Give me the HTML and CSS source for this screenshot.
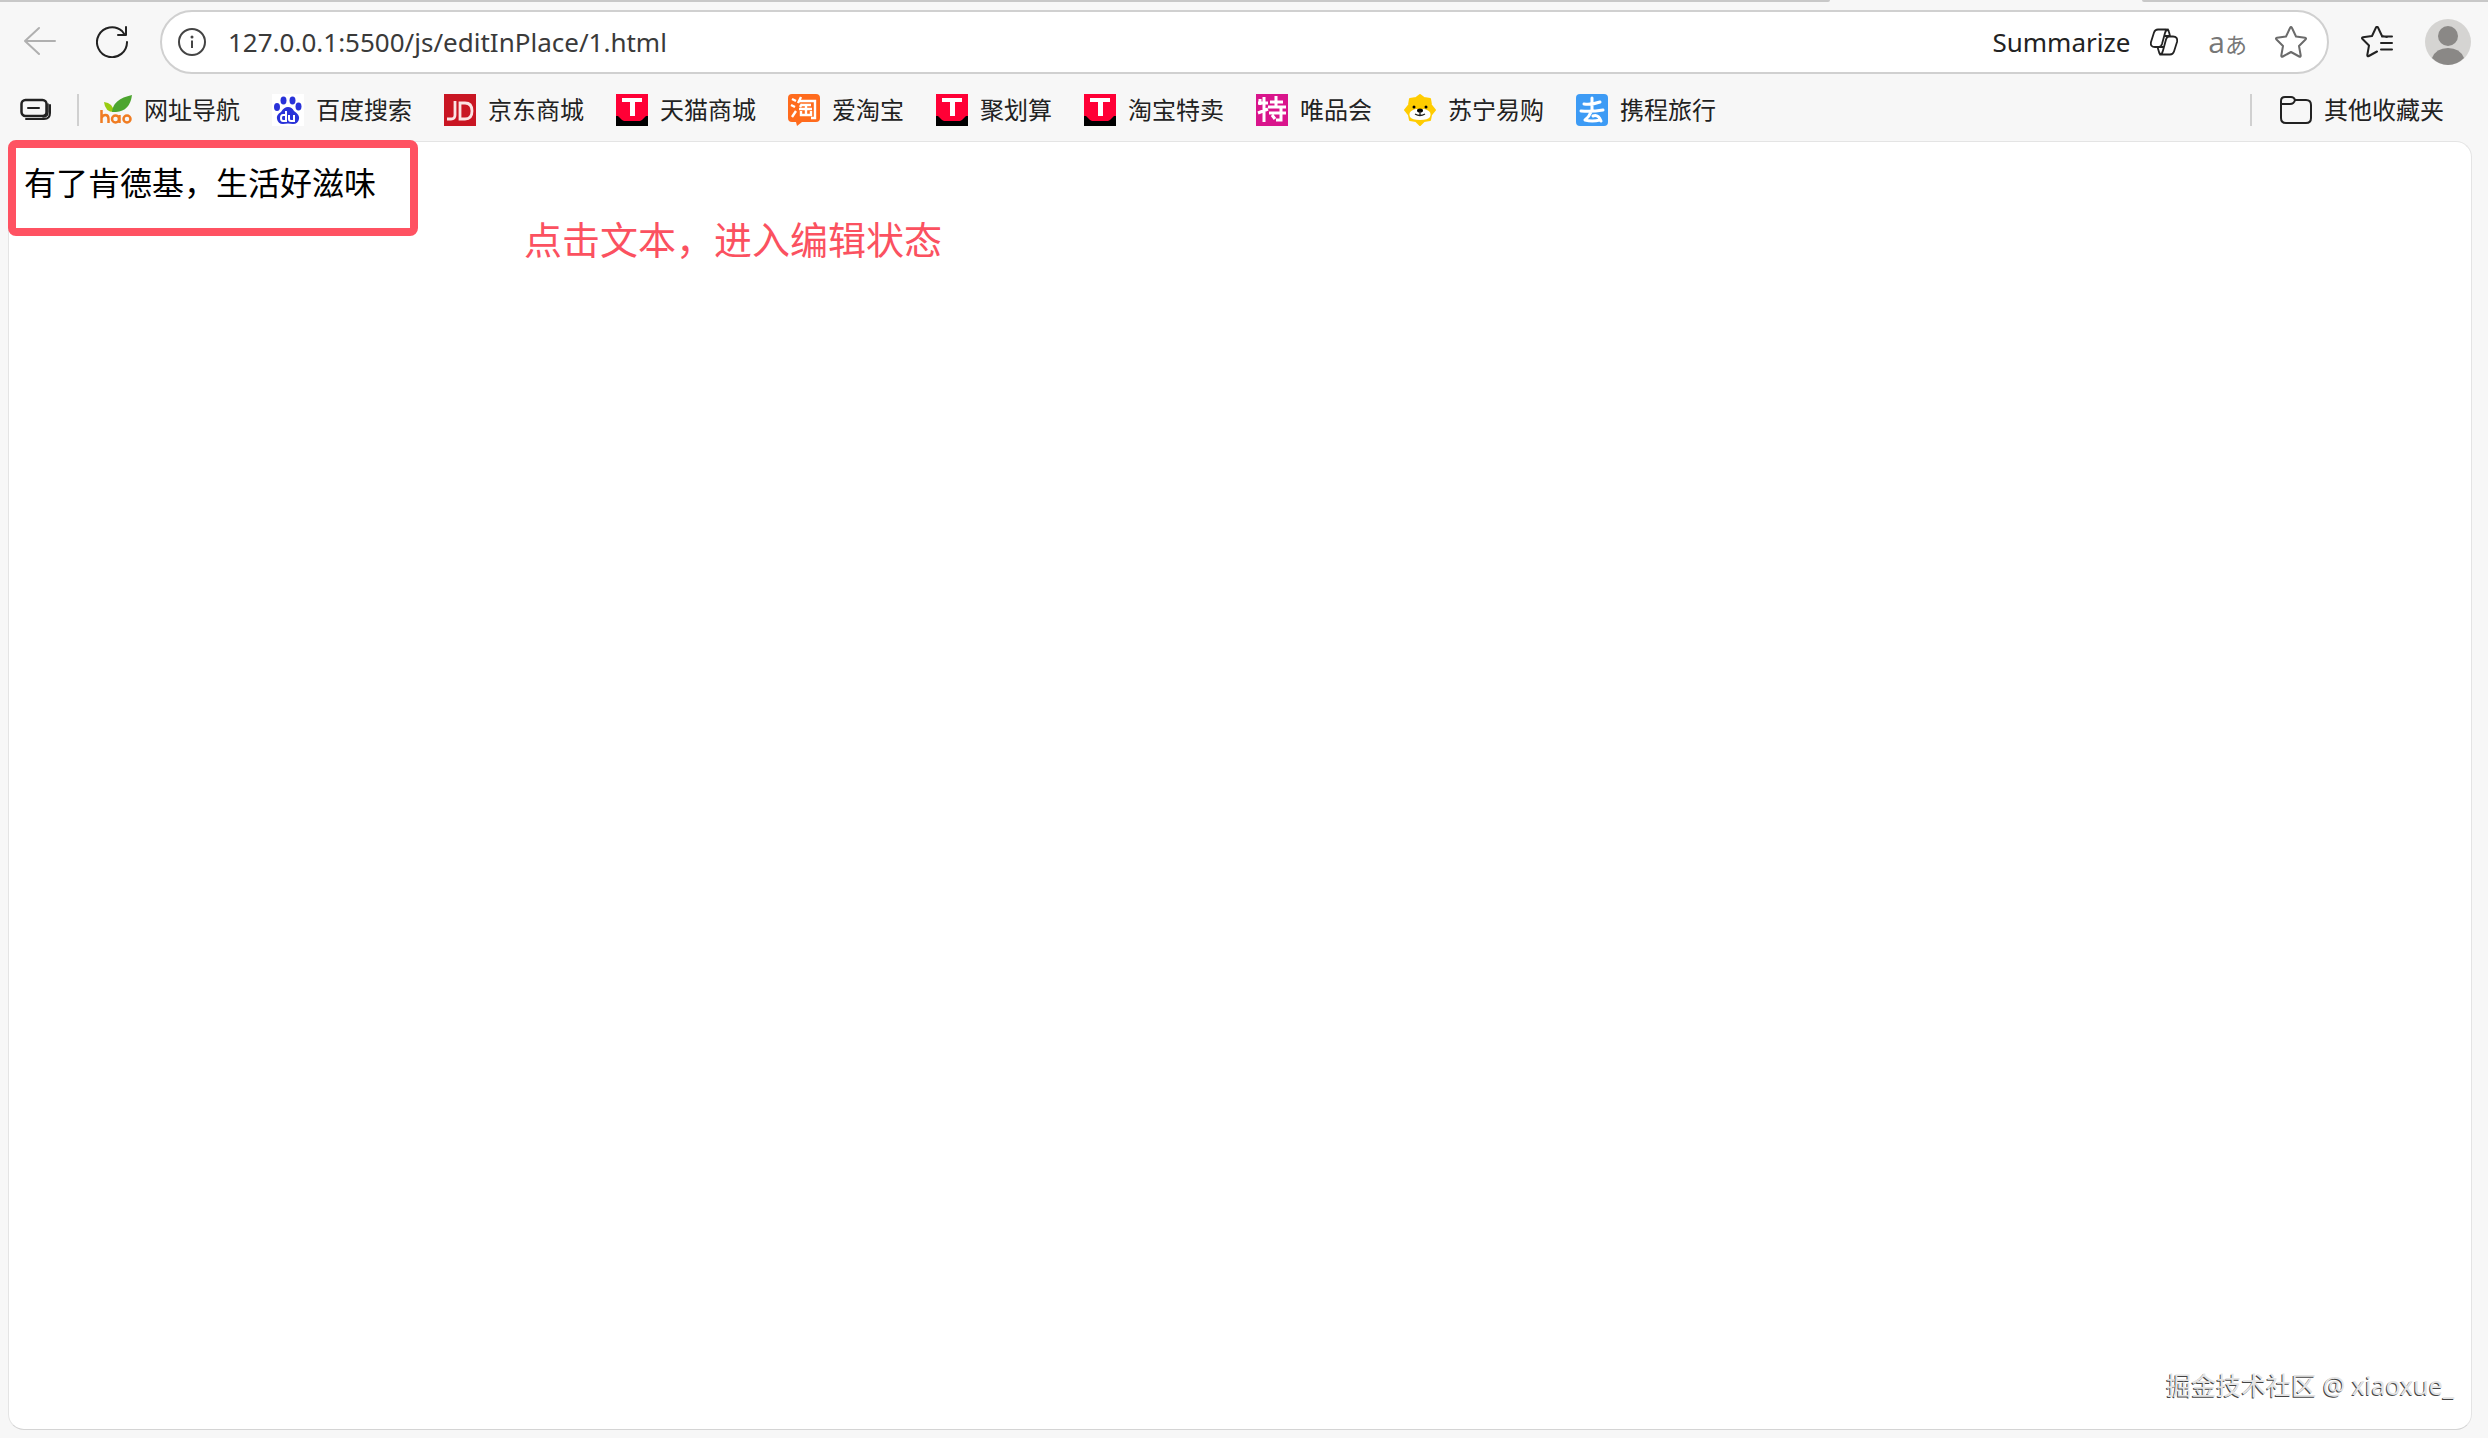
FILE: index.html
```html
<!DOCTYPE html>
<html lang="zh-CN">
<head>
<meta charset="utf-8">
<title>1.html</title>
<link rel="stylesheet" href="styles.css">
</head>
<body>
<svg class="defs" aria-hidden="true">
  <symbol id="tmall" viewBox="0 0 32 32">
    <path fill="#ff0036" d="M0 0h32v32H0z"/>
    <path fill="#000" d="M0 22h2l4 4 2 1h16l2-1 4-4h2v10H0z"/>
    <path fill="#ff0036" d="M6 23h20l-3 4H9z"/>
    <path fill="#fff" d="M6 4h20v4h-7v14h-5V8H6z"/>
  </symbol>
</svg>

<div class="tab-edge"><span class="edge edge-left"></span><span class="edge edge-right"></span></div>

<header class="toolbar">
  <button class="icon-btn back" aria-label="Back">
    <svg viewBox="0 0 32 32" width="32" height="32" fill="none" stroke="#b0b0b0" stroke-width="2" stroke-linecap="round" stroke-linejoin="round"><path d="M31 15H1M15 2L1 15l14 13"/></svg>
  </button>
  <button class="icon-btn reload" aria-label="Refresh">
    <svg viewBox="0 0 32 32" width="32" height="32" fill="none" stroke="#222" stroke-width="2" stroke-linecap="round" stroke-linejoin="round"><path d="M31 16A15 15 0 1 1 26 5L29 9M30 1v8h-8"/></svg>
  </button>
  <div class="address">
    <button class="icon-btn info" aria-label="Site information">
      <svg viewBox="0 0 28 28" width="28" height="28" fill="none" stroke="#444" stroke-width="2"><circle cx="14" cy="14" r="13"/><path d="M14 12.500v7.500"/><circle cx="14" cy="9" r="1.500" fill="#444" stroke="none"/></svg>
    </button>
    <input class="url" type="text" aria-label="Address" value="127.0.0.1:5500/js/editInPlace/1.html">
    <button class="summarize">Summarize
      <svg viewBox="0 0 28 28" width="28" height="28" fill="none" stroke="#222" stroke-width="1.800" stroke-linejoin="round" stroke-linecap="round"><path d="M8 1.500h8q2.500 0 3 2.500l1 4M8 1.500q-3 0-4 3L1 14q-1 5 4 5h4q2 0 3-3l3-11q1-3.500 3-3.500M20 26.500h-8q-2.500 0-3-2.500l-1.500-5M20 26.500q3 0 4-3l3-9.500q1-5.500-4-5.500h-4q-2 0-3 3l-3 11q-1 4-3 4M15 8h4M9 19h4"/></svg>
    </button>
    <button class="translate" aria-label="Translate"><span class="latin">a</span><span class="kana">あ</span></button>
    <button class="icon-btn" aria-label="Add to favorites">
      <svg viewBox="0 0 32 32" width="32" height="32" fill="none" stroke="#6b6b6b" stroke-width="2" stroke-linejoin="round"><path d="M15 2q1-1.800 2 0l4 8.500 9 1.300q1.800.400.500 1.700L24 20l1.700 9.500q.100 1.700-1.500 1L16 26l-8.200 4.500q-1.600.700-1.500-1L8 20l-6.500-6.500Q.200 12.200 2 11.800l9-1.300z"/></svg>
    </button>
  </div>
  <button class="icon-btn favorites" aria-label="Favorites">
    <svg viewBox="0 0 32 32" width="32" height="32" fill="none" stroke="#222" stroke-width="2" stroke-linejoin="round" stroke-linecap="round"><path d="M26 11.500l-5-1L17 2q-1-1.800-2 0l-4 8.500-9 1.300q-1.800.400-.500 1.700L8 20 6.300 29.500q-.1 1.700 1.500 1L16 26M21 11h10M20 17.500h11M20 24h11" transform="translate(0 -.5)"/></svg>
  </button>
  <button class="icon-btn" aria-label="Profile">
    <svg viewBox="0 0 46 46" width="46" height="46"><circle cx="23" cy="23" r="23" fill="#d5d4d2"/><circle cx="23" cy="17" r="10" fill="#8a8886"/><path fill="#8a8886" d="M7 39q4-10 16-10t16 10q-7 7-16 7T7 39z"/></svg>
  </button>
</header>

<nav class="bookmarks">
  <button class="icon-btn" aria-label="Tab groups">
    <svg viewBox="0 0 32 24" width="32" height="24" fill="none" stroke="#222" stroke-linecap="round"><rect x="1.500" y="2" width="25" height="16" rx="4" stroke-width="2.500"/><path stroke-width="2" d="M8 10h11M6 21h18q6 0 6-6V7"/><path stroke-width="1.500" d="M28 6v8q0 5-5 5"/></svg>
  </button>
  <span class="divider first"></span>
  <a href="#"><svg viewBox="0 0 32 32" width="32" height="32"><path fill="#9c1" d="M4 8q9 1 10 10Q5 18 4 8z"/><path fill="#4ca52f" d="M12 18Q13 5 32 1q-2 16-16 17z"/><g fill="none" stroke="#f07c22" stroke-width="2.500"><path d="M1.500 16v13M1.500 24q1-3 4-3 3 0 3 4v4"/><circle cx="15.500" cy="25" r="3.500"/><path d="M19.500 21v8"/><ellipse cx="27" cy="25" rx="3.500" ry="3.500"/></g></svg><span>网址导航</span></a>
  <a href="#"><svg viewBox="0 0 32 32" width="32" height="32"><path fill="#fff" d="M0 0h32v32H0z"/><g fill="#2932d9"><ellipse cx="5" cy="13" rx="3" ry="4"/><ellipse cx="11.500" cy="6.500" rx="3" ry="4"/><ellipse cx="20.500" cy="6.500" rx="3" ry="4"/><ellipse cx="26.500" cy="12.500" rx="3" ry="4"/><path d="M16 13q4 0 6 4 6 4 5 8-1 5-6 5-5-1-10 0-5 0-6-5-1-4 4-7 3-5 7-5z"/></g><path fill="none" stroke="#fff" stroke-width="2" d="M14 17v10h-3q-2 0-2-3t2-3h3M17 21v4q0 2 2 2h3v-6"/></svg><span>百度搜索</span></a>
  <a href="#"><svg viewBox="0 0 32 32" width="32" height="32"><path fill="#c91623" d="M0 0h32v32H0z"/><path fill="none" stroke="#fbe4e4" stroke-width="2.800" d="M11 7v14q0 4-4 4H3M16 9v16h5q7 0 7-8t-7-8z"/></svg><span>京东商城</span></a>
  <a href="#"><svg width="32" height="32"><use href="#tmall"/></svg><span>天猫商城</span></a>
  <a href="#"><svg viewBox="0 0 32 32" width="32" height="32"><path fill="#ff6b1d" d="M4 0h24q4 0 4 4v20q0 4-4 4H14l-5 4-1-4H4q-4 0-4-4V4q0-4 4-4z"/><path fill="none" stroke="#fff" stroke-width="2.400" d="M4 5l4 2M3 11l4 2M4 23l4-6M13 3l-3 6M11 7h16v17h-4M14 10l-2 3M14 11h9M11 15h13M18 11v10M13 17v4h10v-4"/></svg><span>爱淘宝</span></a>
  <a href="#"><svg width="32" height="32"><use href="#tmall"/></svg><span>聚划算</span></a>
  <a href="#"><svg width="32" height="32"><use href="#tmall"/></svg><span>淘宝特卖</span></a>
  <a href="#"><svg viewBox="0 0 32 32" width="32" height="32"><path fill="#d9158c" d="M0 0h32v32H0z"/><path fill="none" stroke="#fff" stroke-width="3" d="M4 5v6M2 9h10M8 3v25M2 19l10-4M14 8h13M20 2v11M12 13h18M13 19h17M25 14v12h-5M16 21l3 4"/></svg><span>唯品会</span></a>
  <a href="#"><svg viewBox="0 0 32 32" width="32" height="32"><path fill="#fc0" stroke="#fc0" stroke-width="2" stroke-linejoin="round" d="M16 1l4 3 6 1 1 6 4 5-4 5-1 5-6 1-4 4-4-4-6-1-1-5-4-5 4-5 1-6 6-1z"/><path fill="#fff" d="M16 16q3-2 7 0 5 2 3 7-2 3-10 3T6 23q-2-5 3-7 4-2 7 0z"/><circle cx="10" cy="13" r="1.500"/><circle cx="22" cy="13" r="1.500"/><ellipse cx="16" cy="16.500" rx="3" ry="2"/><path fill="none" stroke="#222" stroke-width="1.300" d="M16 17v4M11 20q5 3 10 0"/></svg><span>苏宁易购</span></a>
  <a href="#"><svg viewBox="0 0 32 32" width="32" height="32"><rect width="32" height="32" rx="4" fill="#3d9bf5"/><path fill="none" stroke="#fff" stroke-width="3" stroke-linecap="round" stroke-linejoin="round" d="M8 10q8 1 16-2M16 4v13M5 17q11 1 22-1M15 18q-2 5-6 8 7 2 15 0M17 22q5-2 8 5"/></svg><span>携程旅行</span></a>
  <span class="divider last"></span>
  <a href="#"><svg viewBox="0 0 32 32" width="32" height="32" fill="none" stroke="#222" stroke-width="2" stroke-linejoin="round"><path d="M1 7q0-4 4-4h6q3 0 4 3h11q5 0 5 5v13q0 5-5 5H6q-5 0-5-5zM1 10h9q4 0 5-4"/></svg><span>其他收藏夹</span></a>
</nav>

<main class="page">
  <p class="text">有了肯德基，生活好滋味</p>
  <div class="frame"></div>
  <p class="note">点击文本，进入编辑状态</p>
  <p class="watermark">掘金技术社区 @ xiaoxue_</p>
</main>
</body>
</html>
```
FILE: styles.css
```css
* {
  box-sizing: border-box;
}

body {
  margin: 0;
  min-height: 100vh;
  display: flex;
  flex-direction: column;
  background: #f7f7f7;
  color: #222;
  font-family: "Noto Sans", "Noto Sans CJK SC", sans-serif;
}

svg {
  display: block;
  flex: none;
}

.defs {
  position: absolute;
  width: 0;
  height: 0;
}

button {
  border: 0;
  padding: 0;
  background: none;
  color: inherit;
  font: inherit;
}

.tab-edge {
  display: flex;
  gap: 312px;
  height: 2px;
}

.edge {
  background: #c8c8c8;
}

.edge-left {
  flex: 1;
  border-bottom-right-radius: 8px;
}

.edge-right {
  width: 346px;
  border-bottom-left-radius: 8px;
}

.toolbar {
  display: flex;
  align-items: center;
  padding: 8px 17px 0 24px;
}

.reload {
  margin: 0 32px 0 40px;
}

.address {
  flex: 1;
  height: 64px;
  display: flex;
  align-items: center;
  padding: 0 20px 0 16px;
  border: 2px solid #d0d0d0;
  border-radius: 32px;
  background: #fff;
}

.url {
  flex: 1;
  min-width: 0;
  margin-left: 22px;
  padding: 0;
  border: 0;
  outline: 0;
  background: none;
  color: #3a3a3a;
  font-family: "Noto Sans", sans-serif;
  font-size: 26px;
  line-height: 40px;
}

.summarize {
  display: flex;
  align-items: center;
  gap: 20px;
  font-size: 26px;
  line-height: 40px;
}

.translate {
  display: flex;
  align-items: baseline;
  margin: 0 28px 0 30px;
  color: #777;
  line-height: 40px;
}

.latin {
  font-family: "Open Sans", sans-serif;
  font-size: 30px;
}

.kana {
  font-family: "Noto Sans CJK JP", sans-serif;
  font-size: 22px;
}

.favorites {
  margin: 0 32px;
}

.bookmarks {
  display: flex;
  align-items: center;
  gap: 32px;
  height: 63px;
  margin-top: 4px;
  padding: 0 44px 0 20px;
}

.bookmarks a {
  display: flex;
  align-items: center;
  gap: 12px;
  color: #222;
  font-family: "Noto Sans CJK SC", sans-serif;
  font-size: 24px;
  line-height: 32px;
  text-decoration: none;
  white-space: nowrap;
}

.bookmarks a span {
  padding-bottom: 2px;
}

.divider {
  width: 2px;
  height: 32px;
  background: #d0d0d0;
}

.first {
  margin: 0 -11px 0 -7px;
}

.last {
  margin-left: auto;
  margin-right: -4px;
}

.page {
  position: relative;
  flex: 1;
  margin: 0 16px 8px 8px;
  border: 1px solid #e4e4e4;
  border-bottom-color: #d4d4d4;
  border-radius: 16px;
  background: #fff;
  font-family: "Noto Sans CJK SC", sans-serif;
}

.text {
  margin: 15px;
  color: #000;
  font-size: 32px;
  line-height: 48px;
}

.frame {
  position: absolute;
  left: -1px;
  top: -2px;
  width: 410px;
  height: 96px;
  border: 8px solid #ff5262;
  border-radius: 8px;
}

.note {
  position: absolute;
  left: 515px;
  top: 68px;
  margin: 0;
  color: #fb5160;
  font-size: 38px;
  line-height: 56px;
}

.watermark {
  position: absolute;
  right: 17px;
  bottom: 26px;
  margin: 0;
  color: #e4e4e4;
  font-family: "Noto Sans", "Noto Sans CJK SC", sans-serif;
  font-size: 25px;
  line-height: 36px;
  text-shadow: -1px 1px 0 #444;
}
```
